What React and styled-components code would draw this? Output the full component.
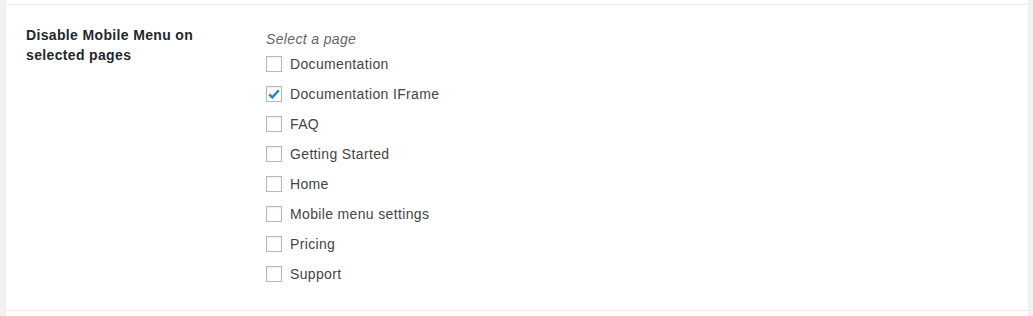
import styled, { createGlobalStyle } from "styled-components";

const Global = createGlobalStyle`
  body {
    margin: 0;
    background: #f1f1f1;
    font-family: "Liberation Sans", Arial, sans-serif;
    font-size: 14px;
    letter-spacing: 0.35px;
  }
`;

const Panel = styled.div`
  background: #fff;
  margin: 0 5px 0 6px;
  padding: 4px 0 5px;
`;

const Row = styled.div`
  display: flex;
  border-top: 1px solid #ececec;
  border-bottom: 1px solid #ececec;
`;

const Th = styled.div`
  width: 260px;
  box-sizing: border-box;
  padding: 20px 10px 20px 20px;
  font-weight: bold;
  line-height: 20px;
  color: #23282d;
`;

const Td = styled.div`
  flex: 1;
  padding: 25px 10px 21px 0;
`;

const Legend = styled.div`
  font-style: italic;
  color: #666;
  line-height: 19px;
`;

const Option = styled.label`
  display: flex;
  align-items: center;
  height: 30px;
  color: #444;
  cursor: pointer;
`;

const Box = styled.span`
  width: 16px;
  height: 16px;
  box-sizing: border-box;
  border: 1px solid #b4b9be;
  box-shadow: inset 0 1px 2px rgba(0, 0, 0, 0.07);
  background: #fff;
  margin-right: 8px;
  display: flex;
  align-items: center;
  justify-content: center;
`;

const Check = () => (
  <svg width="14" height="14" viewBox="0 0 14 14">
    <path
      d="M2.2 7.4 L5.3 10.4 L11.8 3.2"
      fill="none"
      stroke="#1e8cbe"
      strokeWidth="2.4"
    />
  </svg>
);

const pages = [
  { name: "Documentation" },
  { name: "Documentation IFrame", checked: true },
  { name: "FAQ" },
  { name: "Getting Started" },
  { name: "Home" },
  { name: "Mobile menu settings" },
  { name: "Pricing" },
  { name: "Support" },
];

const App = () => {
  return (
    <>
      <Global />
      <Panel>
        <Row>
          <Th>Disable Mobile Menu on selected pages</Th>
          <Td>
            <Legend>Select a page</Legend>
            {pages.map((p) => (
              <Option key={p.name}>
                <Box>{p.checked && <Check />}</Box>
                {p.name}
              </Option>
            ))}
          </Td>
        </Row>
      </Panel>
    </>
  );
};

export default App;
